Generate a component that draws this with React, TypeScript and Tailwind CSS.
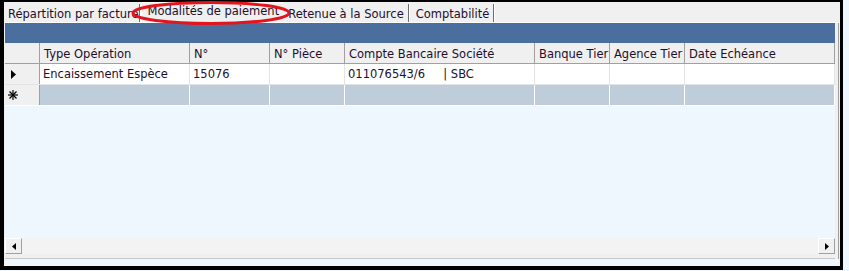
import React from 'react';

const font = { fontFamily: '"DejaVu Sans", Verdana, sans-serif' };

const columns = [
  { label: 'Type Opération', width: 'w-[150px]' },
  { label: 'N°', width: 'w-[80px]' },
  { label: 'N° Pièce', width: 'w-[75px]' },
  { label: 'Compte Bancaire Société', width: 'w-[190px]' },
  { label: 'Banque Tier', width: 'w-[75px]' },
  { label: 'Agence Tier', width: 'w-[75px]' },
  { label: 'Date Echéance', width: 'flex-1' },
];

const row = ['Encaissement Espèce', '15076', '', '011076543/6     | SBC', '', '', ''];

const tabs = [
  { label: 'Répartition par facture', active: false, pad: 'pl-[4px] pr-[0px]' },
  { label: 'Modalités de paiement', active: true, pad: 'pl-[6px] pr-[4px]' },
  { label: 'Retenue à la Source', active: false, pad: 'pl-[5px] pr-[4px]' },
  { label: 'Comptabilité', active: false, pad: 'pl-[6px] pr-[4px]' },
];

const ArrowButton = ({ dir }: { dir: 'left' | 'right' }) => (
  <div className="w-[17px] h-[16px] bg-[#f0f0f0] border-t border-l border-t-white border-l-white border-b border-r border-b-[#a0a0a0] border-r-[#a0a0a0] flex items-center justify-center">
    <svg width="4" height="7" viewBox="0 0 4 7">
      {dir === 'left' ? <path d="M4 0 L0 3.5 L4 7 Z" fill="#000" /> : <path d="M0 0 L4 3.5 L0 7 Z" fill="#000" />}
    </svg>
  </div>
);

const App = () => {
  return (
    <div className="w-[849px] h-[271px] bg-[#eef6fe] relative overflow-hidden text-[11.5px] text-[#1c0f2c]" style={font}>
      <div className="w-[843px] h-[270px] border-black border-l-4 border-t-2 border-r-[3px] border-b-4 flex flex-col bg-[#eef6fe]">
        {/* tab strip */}
        <div className="h-[20px] bg-[#f0f0f0] flex items-end shrink-0">
          {tabs.map((t) =>
            t.active ? (
              <div key={t.label} className={`h-[20px] ${t.pad} bg-[#f0f0f0] border-l border-t border-white leading-[16px] whitespace-nowrap`}>
                {t.label}
              </div>
            ) : (
              <div key={t.label} className={`h-[18px] ${t.pad} pt-[1px] leading-[18px] whitespace-nowrap border-r border-r-[#6e6e6e] shadow-[1px_0_0_#ffffff] mr-[1px]`}>
                {t.label}
              </div>
            )
          )}
        </div>

        {/* page */}
        <div className="flex-1 flex flex-col bg-[#f0f0f0] pl-[1px] pr-[1px] border-t border-white">
          <div className="flex-1 flex flex-col border-r border-r-[#a0a0a0] pr-[3px] bg-[#f0f0f0]">
            <div className="h-[20px] bg-[#4a6e9e] shrink-0" />

            {/* header */}
            <div className="flex h-[21px] bg-[#f0f0f0] border-b border-[#a0a0a0] shrink-0">
              <div className="w-[35px] border-r border-[#a0a0a0]" />
              {columns.map((c) => (
                <div key={c.label} className={`${c.width} border-r border-[#a0a0a0] px-[4px] pt-[1px] leading-[20px] whitespace-nowrap overflow-hidden`}>
                  {c.label}
                </div>
              ))}
            </div>

            {/* data row */}
            <div className="flex h-[21px] bg-white border-b border-[#e4e4e4] shrink-0">
              <div className="w-[35px] border-r border-[#a0a0a0] bg-[#f0f0f0] flex items-center pl-[6px]">
                <svg width="5" height="9" viewBox="0 0 5 9">
                  <path d="M0 0 L5 4.5 L0 9 Z" fill="#000" />
                </svg>
              </div>
              {columns.map((c, i) => (
                <div key={c.label} className={`${c.width} border-r border-[#e4e4e4] px-[3px] leading-[20px] whitespace-pre overflow-hidden`}>
                  {row[i]}
                </div>
              ))}
            </div>

            {/* new row */}
            <div className="flex h-[21px] bg-[#bfccd9] border-b border-white shrink-0">
              <div className="w-[35px] border-r border-[#a0a0a0] bg-[#f0f0f0] flex items-center pl-[3px]">
                <svg width="10" height="10" viewBox="0 0 10 10" stroke="#000" strokeWidth="1.2">
                  <line x1="5" y1="0" x2="5" y2="10" />
                  <line x1="0" y1="5" x2="10" y2="5" />
                  <line x1="1.5" y1="1.5" x2="8.5" y2="8.5" />
                  <line x1="8.5" y1="1.5" x2="1.5" y2="8.5" />
                </svg>
              </div>
              {columns.map((c) => (
                <div key={c.label} className={`${c.width} border-r border-white`} />
              ))}
            </div>

            <div className="flex-1 bg-[#eef6fe]" />

            {/* horizontal scrollbar */}
            <div className="flex h-[16px] shrink-0 bg-[#f4f4f4]">
              <ArrowButton dir="left" />
              <div className="flex-1 bg-[#f3f3f3]" />
              <ArrowButton dir="right" />
            </div>
            <div className="h-[5px] bg-[#f0f0f0] border-b border-[#c8c8c8] shrink-0" />
          </div>
          <div className="h-[7px] bg-[#eef6fe] shrink-0" />
        </div>
      </div>

      {/* red annotation ellipse */}
      <svg className="absolute left-0 top-0 pointer-events-none" width="849" height="271">
        <ellipse cx="211" cy="13" rx="78" ry="10.5" fill="none" stroke="#e3141b" strokeWidth="3" />
      </svg>
    </div>
  );
};

export default App;
